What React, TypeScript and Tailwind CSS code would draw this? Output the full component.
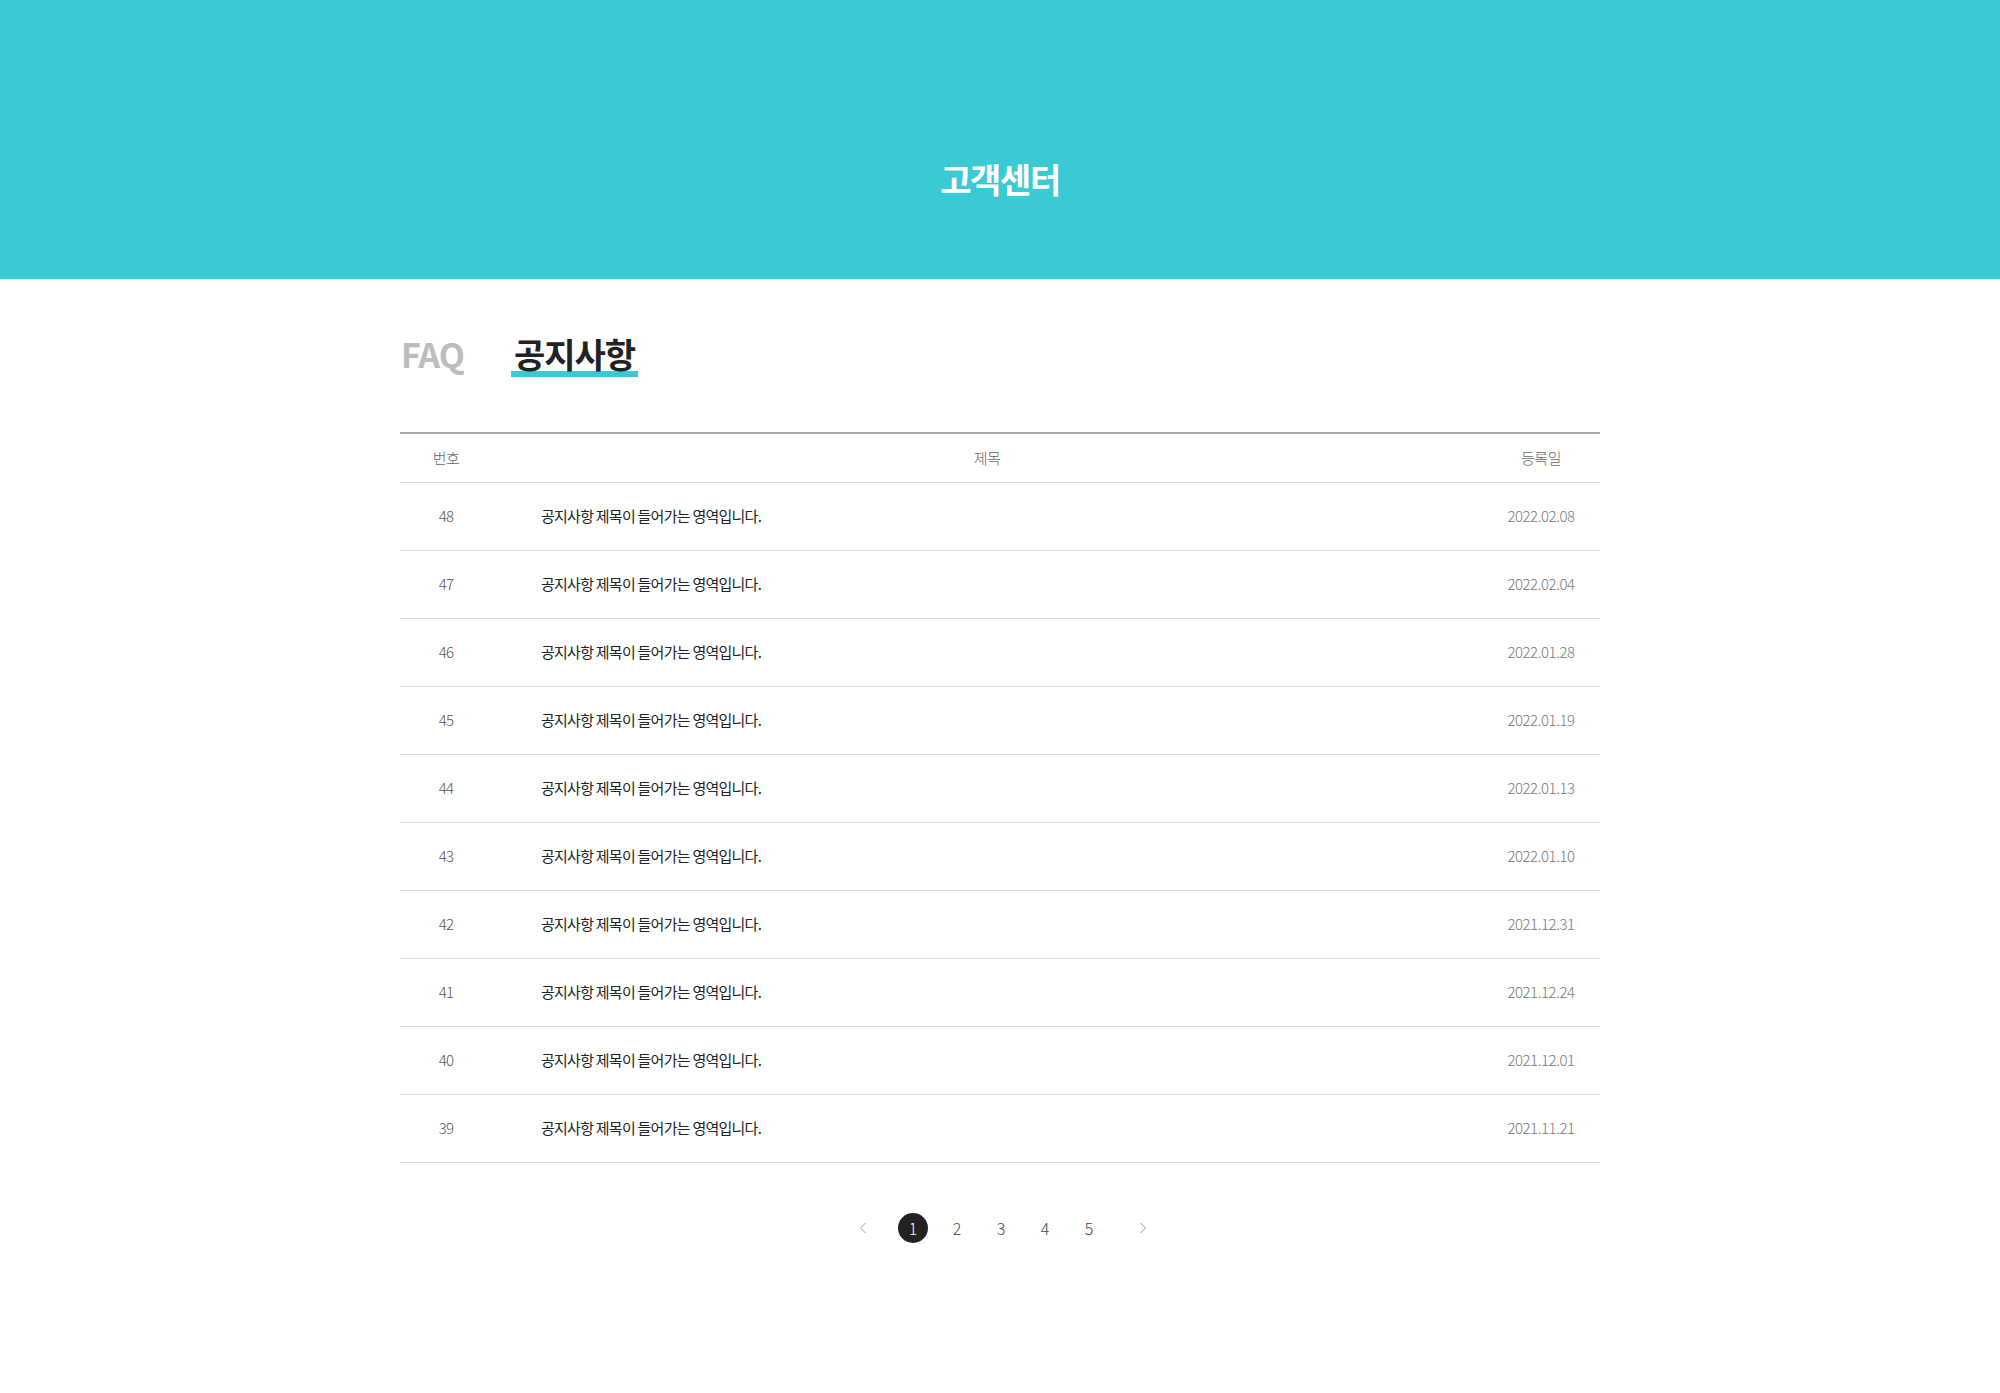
import React from "react";

const notices = [
  { no: 48, date: "2022.02.08" },
  { no: 47, date: "2022.02.04" },
  { no: 46, date: "2022.01.28" },
  { no: 45, date: "2022.01.19" },
  { no: 44, date: "2022.01.13" },
  { no: 43, date: "2022.01.10" },
  { no: 42, date: "2021.12.31" },
  { no: 41, date: "2021.12.24" },
  { no: 40, date: "2021.12.01" },
  { no: 39, date: "2021.11.21" },
];

const Chevron = ({ dir }: { dir: "left" | "right" }) => (
  <svg width="8" height="12" viewBox="0 0 8 12" fill="none">
    <path
      d={dir === "left" ? "M6.5 1 1.5 6l5 5" : "M1.5 1l5 5-5 5"}
      stroke="#9a9a9a"
      strokeWidth="1"
    />
  </svg>
);

const App = () => {
  return (
    <div className="min-h-[1393px] bg-white font-['Noto_Sans_CJK_KR','Noto_Sans',sans-serif]">
      {/* top banner */}
      <div className="h-[279px] bg-[#3bc9d3] pt-[161px] text-center">
        <h1 className="text-[34px] font-bold text-white tracking-[-0.04em] leading-[36px]">
          고객센터
        </h1>
      </div>

      <div className="w-[1200px] mx-auto pt-[55px]">
        {/* tabs */}
        <div className="flex items-end gap-[47px] pl-[1px]">
          <span className="text-[34px] font-bold text-[#bdbdbd] leading-[40px] tracking-[-0.03em]">
            FAQ
          </span>
          <span className="relative px-[3px] text-[34px] font-bold text-[#222] leading-[40px] tracking-[-0.03em]">
            <span className="absolute left-0 right-0 bottom-[-3px] h-[6px] bg-[#3bc9d3]" />
            <span className="relative">공지사항</span>
          </span>
        </div>

        {/* list */}
        <div className="mt-[58px] border-t-2 border-[#a9a9a9]">
          <div className="flex h-[49px] items-center border-b border-[#dcdcdc] text-[15px] font-light text-[#666] tracking-[-0.03em]">
            <div className="w-[92px] text-center">번호</div>
            <div className="flex-1 text-center">제목</div>
            <div className="w-[118px] text-center">등록일</div>
          </div>
          {notices.map((n) => (
            <div
              key={n.no}
              className="flex h-[68px] items-center border-b border-[#dcdcdc] text-[15px] tracking-[-0.05em]"
            >
              <div className="w-[92px] text-center font-light text-[#555]">{n.no}</div>
              <div className="flex-1 pl-[49px] text-[#222]">
                공지사항 제목이 들어가는 영역입니다.
              </div>
              <div className="w-[118px] text-center font-light text-[#777] tracking-[-0.03em]">
                {n.date}
              </div>
            </div>
          ))}
        </div>

        {/* pagination */}
        <div className="mt-[50px] pl-[6px] flex items-center justify-center gap-[14px] text-[16px] font-light text-[#444]">
          <button className="w-[30px] h-[30px] mr-[6px] flex items-center justify-center">
            <Chevron dir="left" />
          </button>
          <button className="w-[30px] h-[30px] rounded-full bg-[#222] text-white flex items-center justify-center">
            1
          </button>
          {[2, 3, 4, 5].map((p) => (
            <button key={p} className="w-[30px] h-[30px] flex items-center justify-center">
              {p}
            </button>
          ))}
          <button className="w-[30px] h-[30px] ml-[10px] flex items-center justify-center">
            <Chevron dir="right" />
          </button>
        </div>
      </div>
    </div>
  );
};

export default App;
